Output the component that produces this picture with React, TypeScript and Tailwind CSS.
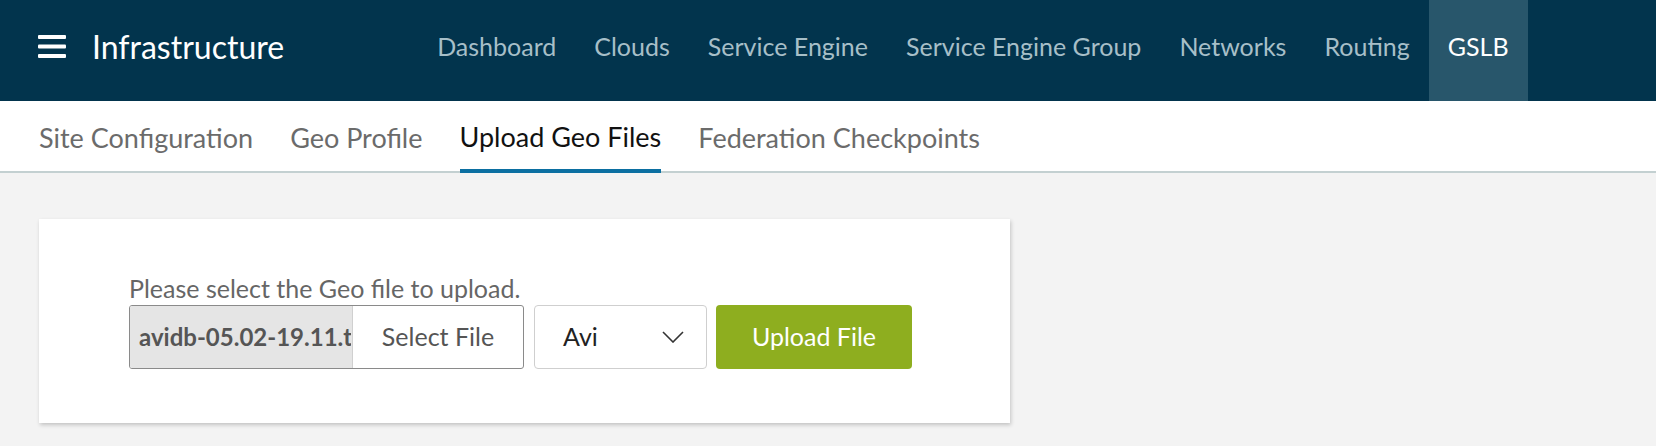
import React from "react";

const navItems = [
  "Dashboard",
  "Clouds",
  "Service Engine",
  "Service Engine Group",
  "Networks",
  "Routing",
  "GSLB",
];

const tabs = [
  "Site Configuration",
  "Geo Profile",
  "Upload Geo Files",
  "Federation Checkpoints",
];

const font = { fontFamily: "Lato, 'Open Sans', sans-serif" };

export default function App() {
  return (
    <div className="min-h-screen w-[1656px] bg-[#f3f3f3]" style={font}>
      {/* top header */}
      <header className="flex h-[101px] bg-[#02344d]">
        <div className="flex items-center pb-2 pl-[38px]">
          <svg width="28" height="23" viewBox="0 0 28 23" className="shrink-0">
            <rect x="0" y="0" width="28" height="4" rx="1" fill="#fff" />
            <rect x="0" y="9.5" width="28" height="4" rx="1" fill="#fff" />
            <rect x="0" y="19" width="28" height="4" rx="1" fill="#fff" />
          </svg>
          <span className="ml-[26px] text-[32px] text-white">Infrastructure</span>
        </div>
        <nav className="ml-[134px] flex">
          {navItems.map((item) => (
            <a
              key={item}
              className={
                item === "GSLB"
                  ? "flex items-center bg-[#28566b] px-[19px] pb-2 text-[25px] text-white"
                  : "flex items-center px-[19px] pb-2 text-[25px] text-[#a7bfc8]"
              }
            >
              {item}
            </a>
          ))}
        </nav>
      </header>

      {/* sub tabs */}
      <div className="flex h-[72px] gap-[37px] border-b-[2px] border-[#c3d0d1] bg-white pl-[39px]">
        {tabs.map((tab) => (
          <div
            key={tab}
            className={
              tab === "Upload Geo Files"
                ? "-mb-[2px] flex items-center border-b-4 border-[#0b6fa1] pt-[5px] text-[27px] text-[#111]"
                : "flex items-center pt-[5px] text-[27px] text-[#6b6b6b]"
            }
          >
            {tab}
          </div>
        ))}
      </div>

      {/* card */}
      <div className="px-[39px] pt-[46px]">
        <div className="h-[204px] w-[971px] bg-white pl-[90px] pt-[55px] shadow-[1px_2px_4px_rgba(0,0,0,0.2)]">
          <p className="text-[25px] leading-[29px] text-[#666]">
            Please select the Geo file to upload.
          </p>
          <div className="mt-[2px] flex items-center">
            <div className="flex h-[64px] w-[395px] overflow-hidden rounded-[3px] border border-[#8a8a8a]">
              <div className="flex w-[223px] items-center border-r border-[#d0d0d0] bg-[#e5e5e5] pl-[9px]">
                <span className="block w-[212px] overflow-hidden whitespace-nowrap text-[24px] font-bold text-[#555]">
                  avidb-05.02-19.11.tar.gz
                </span>
              </div>
              <div className="flex flex-1 items-center justify-center text-[25px] text-[#555]">
                Select File
              </div>
            </div>
            <div className="ml-[10px] flex h-[64px] w-[173px] items-center justify-between rounded-[4px] border border-[#cfcfcf] pl-[28px] pr-[22px] text-[25px] text-[#222]">
              <span>Avi</span>
              <svg width="22" height="12" viewBox="0 0 22 12" fill="none">
                <path d="M1 1l10 10L21 1" stroke="#333" strokeWidth="1.6" />
              </svg>
            </div>
            <button className="ml-[9px] h-[64px] w-[196px] rounded-[4px] bg-[#8eae1f] text-[25px] text-white">
              Upload File
            </button>
          </div>
        </div>
      </div>
    </div>
  );
}
